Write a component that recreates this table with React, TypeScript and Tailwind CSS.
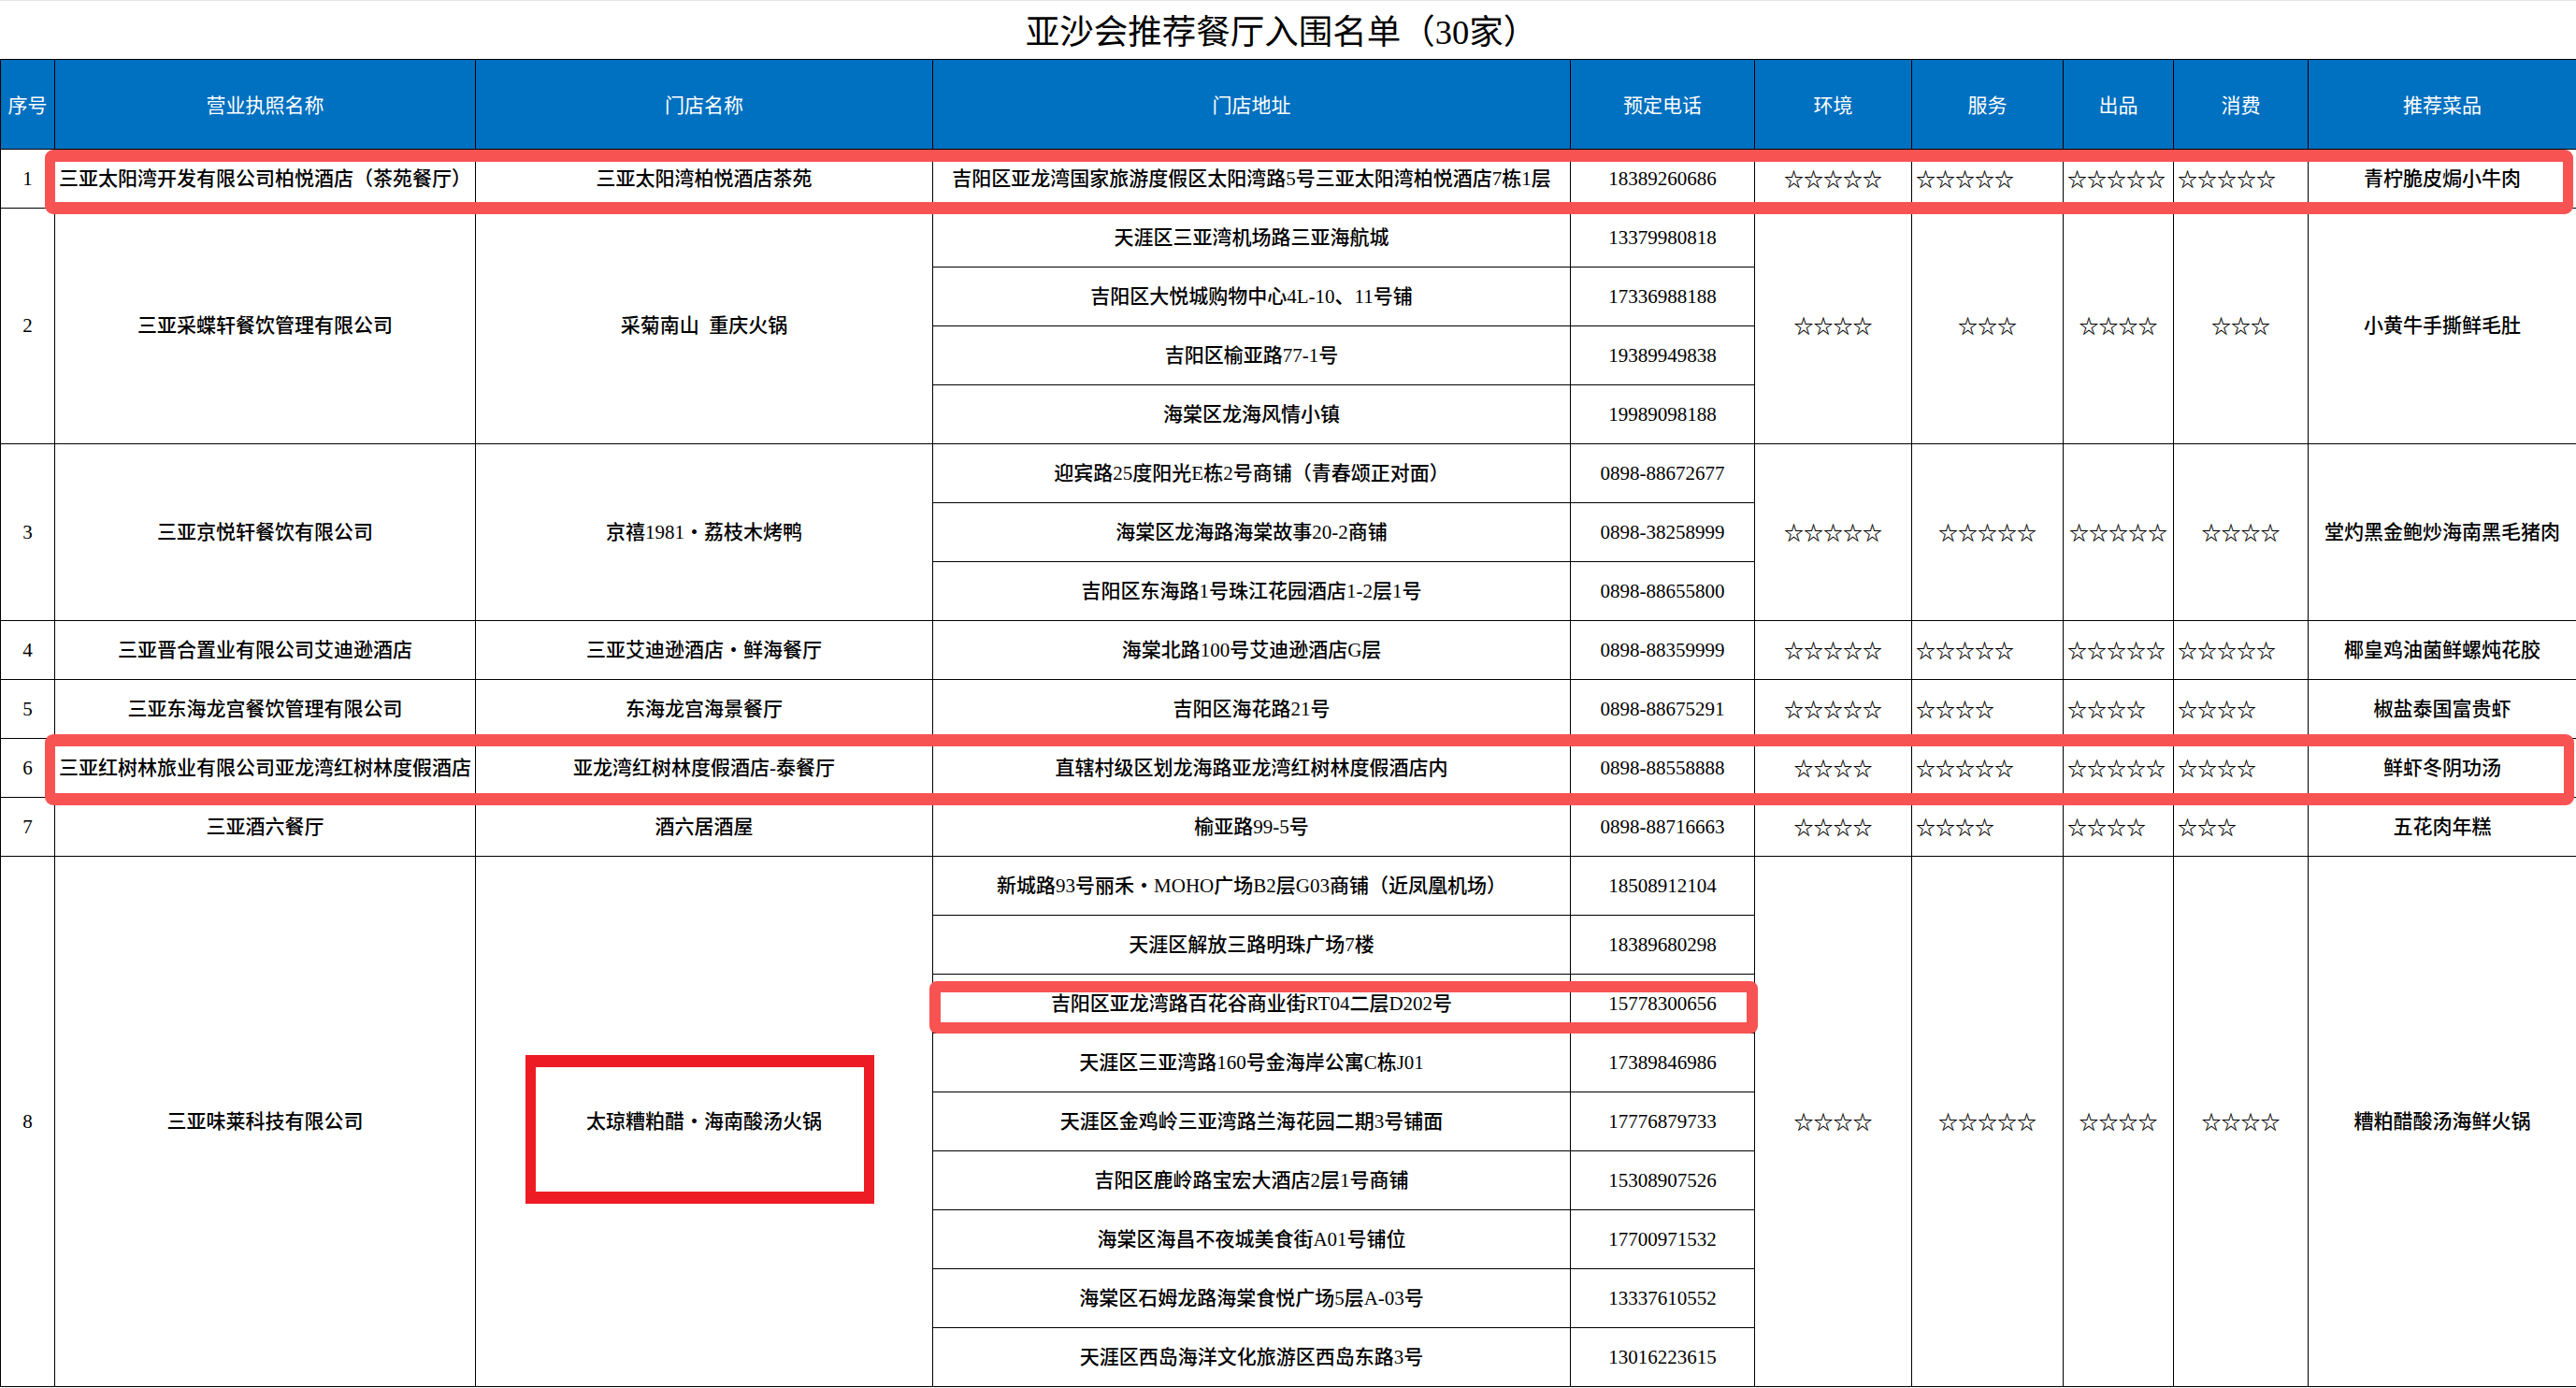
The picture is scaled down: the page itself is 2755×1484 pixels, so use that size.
import React from "react";

type Row = {
  no: number;
  company: string;
  store: string;
  locs: [string, string][];
  stars: [number, number, number, number];
  dish: string;
  left?: boolean;
};

const ROWS: Row[] = [
  {
    no: 1,
    company: "三亚太阳湾开发有限公司柏悦酒店（茶苑餐厅）",
    store: "三亚太阳湾柏悦酒店茶苑",
    locs: [["吉阳区亚龙湾国家旅游度假区太阳湾路5号三亚太阳湾柏悦酒店7栋1层", "18389260686"]],
    stars: [5, 5, 5, 5],
    dish: "青柠脆皮焗小牛肉",
    left: true,
  },
  {
    no: 2,
    company: "三亚采蝶轩餐饮管理有限公司",
    store: "采菊南山\u2002重庆火锅",
    locs: [
      ["天涯区三亚湾机场路三亚海航城", "13379980818"],
      ["吉阳区大悦城购物中心4L-10、11号铺", "17336988188"],
      ["吉阳区榆亚路77-1号", "19389949838"],
      ["海棠区龙海风情小镇", "19989098188"],
    ],
    stars: [4, 3, 4, 3],
    dish: "小黄牛手撕鲜毛肚",
  },
  {
    no: 3,
    company: "三亚京悦轩餐饮有限公司",
    store: "京禧1981・荔枝木烤鸭",
    locs: [
      ["迎宾路25度阳光E栋2号商铺（青春颂正对面）", "0898-88672677"],
      ["海棠区龙海路海棠故事20-2商铺", "0898-38258999"],
      ["吉阳区东海路1号珠江花园酒店1-2层1号", "0898-88655800"],
    ],
    stars: [5, 5, 5, 4],
    dish: "堂灼黑金鲍炒海南黑毛猪肉",
  },
  {
    no: 4,
    company: "三亚晋合置业有限公司艾迪逊酒店",
    store: "三亚艾迪逊酒店・鲜海餐厅",
    locs: [["海棠北路100号艾迪逊酒店G层", "0898-88359999"]],
    stars: [5, 5, 5, 5],
    dish: "椰皇鸡油菌鲜螺炖花胶",
    left: true,
  },
  {
    no: 5,
    company: "三亚东海龙宫餐饮管理有限公司",
    store: "东海龙宫海景餐厅",
    locs: [["吉阳区海花路21号", "0898-88675291"]],
    stars: [5, 4, 4, 4],
    dish: "椒盐泰国富贵虾",
    left: true,
  },
  {
    no: 6,
    company: "三亚红树林旅业有限公司亚龙湾红树林度假酒店",
    store: "亚龙湾红树林度假酒店-泰餐厅",
    locs: [["直辖村级区划龙海路亚龙湾红树林度假酒店内", "0898-88558888"]],
    stars: [4, 5, 5, 4],
    dish: "鲜虾冬阴功汤",
    left: true,
  },
  {
    no: 7,
    company: "三亚酒六餐厅",
    store: "酒六居酒屋",
    locs: [["榆亚路99-5号", "0898-88716663"]],
    stars: [4, 4, 4, 3],
    dish: "五花肉年糕",
    left: true,
  },
  {
    no: 8,
    company: "三亚味莱科技有限公司",
    store: "太琼糟粕醋・海南酸汤火锅",
    locs: [
      ["新城路93号丽禾・MOHO广场B2层G03商铺（近凤凰机场）", "18508912104"],
      ["天涯区解放三路明珠广场7楼", "18389680298"],
      ["吉阳区亚龙湾路百花谷商业街RT04二层D202号", "15778300656"],
      ["天涯区三亚湾路160号金海岸公寓C栋J01", "17389846986"],
      ["天涯区金鸡岭三亚湾路兰海花园二期3号铺面", "17776879733"],
      ["吉阳区鹿岭路宝宏大酒店2层1号商铺", "15308907526"],
      ["海棠区海昌不夜城美食街A01号铺位", "17700971532"],
      ["海棠区石姆龙路海棠食悦广场5层A-03号", "13337610552"],
      ["天涯区西岛海洋文化旅游区西岛东路3号", "13016223615"],
    ],
    stars: [4, 5, 4, 4],
    dish: "糟粕醋酸汤海鲜火锅",
  },
];

const HEADERS = ["序号", "营业执照名称", "门店名称", "门店地址", "预定电话", "环境", "服务", "出品", "消费", "推荐菜品"];

const td = "border border-black p-0 text-center align-middle whitespace-nowrap";

function Stars({ n, span, left }: { n: number; span: number; left?: boolean }) {
  return (
    <td rowSpan={span} className={`${td} ${left ? "text-left pl-[4px]" : ""}`}>
      <span className="font-['Noto_Sans_CJK_SC',sans-serif] font-bold">{"☆".repeat(n)}</span>
    </td>
  );
}

export default function App() {
  return (
    <div className="relative w-[2755px] h-[1484px] overflow-hidden bg-white text-black font-['Liberation_Serif','Noto_Sans_CJK_SC',serif]">
      {/* title */}
      <div className="h-[63px] border-t border-[#e4e4e4] flex items-center justify-center pt-[6px] pr-[14px] text-[36.5px] leading-none">
        亚沙会推荐餐厅入围名单（30家）
      </div>

      <table className="table-fixed border-collapse w-[2755px] text-[21px] leading-none font-medium">
        <colgroup>
          <col className="w-[58px]" />
          <col className="w-[450px]" />
          <col className="w-[489px]" />
          <col className="w-[682px]" />
          <col className="w-[197px]" />
          <col className="w-[168px]" />
          <col className="w-[162px]" />
          <col className="w-[118px]" />
          <col className="w-[144px]" />
          <col className="w-[287px]" />
        </colgroup>
        <thead>
          <tr className="h-[96px] bg-[#0070c0] text-white">
            {HEADERS.map((h) => (
              <th key={h} className={`${td} font-normal pt-[4px]`}>
                {h}
              </th>
            ))}
          </tr>
        </thead>
        <tbody>
          {ROWS.map((r) =>
            r.locs.map((loc, i) => {
              const span = r.locs.length;
              return (
                <tr key={`${r.no}-${i}`} className="h-[63px]">
                  {i === 0 && (
                    <>
                      <td rowSpan={span} className={td}>{r.no}</td>
                      <td rowSpan={span} className={td}>{r.company}</td>
                      <td rowSpan={span} className={td}>{r.store}</td>
                    </>
                  )}
                  <td className={td}>{loc[0]}</td>
                  <td className={td}>{loc[1]}</td>
                  {i === 0 && (
                    <>
                      <Stars n={r.stars[0]} span={span} />
                      <Stars n={r.stars[1]} span={span} left={r.left} />
                      <Stars n={r.stars[2]} span={span} left={r.left} />
                      <Stars n={r.stars[3]} span={span} left={r.left} />
                      <td rowSpan={span} className={td}>{r.dish}</td>
                    </>
                  )}
                </tr>
              );
            })
          )}
        </tbody>
      </table>

      {/* highlight marks drawn over the sheet */}
      <div className="absolute left-[48px] top-[160px] w-[2704px] h-[69px] border-x-[11px] border-y-[13px] border-[#f85353] rounded-[9px]" />
      <div className="absolute left-[48px] top-[785px] w-[2705px] h-[76px] border-x-[11px] border-y-[13px] border-[#f85353] rounded-[9px]" />
      <div className="absolute left-[994px] top-[1049px] w-[886px] h-[56px] border-[12px] border-[#f85353] rounded-[8px]" />
      <div className="absolute left-[562px] top-[1128px] w-[373px] h-[159px] border-x-[11px] border-y-[13px] border-[#ed1c24]" />
    </div>
  );
}
